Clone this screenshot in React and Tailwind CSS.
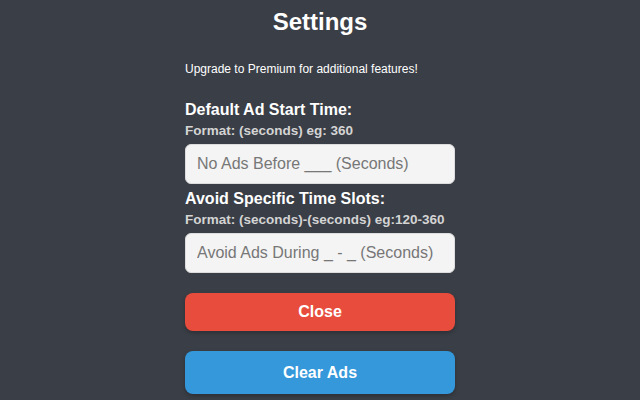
export default function App() {
  return (
    <div className="w-full h-[400px] overflow-hidden bg-[#3a3e46] text-white" style={{ fontFamily: '"Liberation Sans", Arial, sans-serif' }}>
      <h1 className="pt-[8px] text-center text-[24px] leading-[28px] font-bold">Settings</h1>
      <div className="mx-auto w-[270px] flex flex-col">
        <p className="mt-[25px] text-[12px] leading-[16px]">Upgrade to Premium for additional features!</p>
        <h2 className="mt-[23px] text-[16px] leading-[20px] font-bold">Default Ad Start Time:</h2>
        <div className="mt-[3px] text-[13.5px] leading-[16px] font-bold text-[#d4d4d4]">Format: (seconds) eg: 360</div>
        <input
          type="text"
          placeholder="No Ads Before ___ (Seconds)"
          className="mt-[5px] h-[40px] w-full rounded-[6px] border border-[#dcdcdc] bg-[#f4f4f4] px-[11px] text-[16px] text-[#333] placeholder:text-[#777] outline-none"
        />
        <h2 className="mt-[5px] text-[16px] leading-[20px] font-bold">Avoid Specific Time Slots:</h2>
        <div className="mt-[3px] text-[13.5px] leading-[16px] font-bold text-[#d4d4d4]">Format: (seconds)-(seconds) eg:120-360</div>
        <input
          type="text"
          placeholder="Avoid Ads During _ - _ (Seconds)"
          className="mt-[5px] h-[40px] w-full rounded-[6px] border border-[#dcdcdc] bg-[#f4f4f4] px-[11px] text-[16px] text-[#333] placeholder:text-[#777] outline-none"
        />
        <button className="mt-[20px] h-[38px] w-full rounded-[8px] bg-[#e74c3c] text-[16px] font-bold text-white shadow-[0_2px_4px_rgba(0,0,0,0.25)]">Close</button>
        <button className="mt-[20px] h-[43px] w-full rounded-[8px] bg-[#3498db] text-[16px] font-bold text-white shadow-[0_2px_4px_rgba(0,0,0,0.25)]">Clear Ads</button>
      </div>
    </div>
  );
}
